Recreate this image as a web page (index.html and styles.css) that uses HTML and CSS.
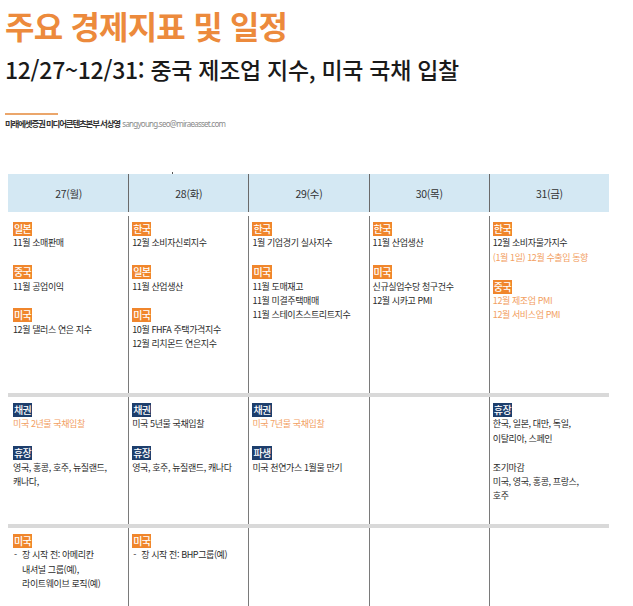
FILE: index.html
```html
<!DOCTYPE html>
<html lang="ko">
<head>
<meta charset="utf-8">
<link rel="stylesheet" href="styles.css">
</head>
<body>
<div class="page">
  <header class="head">
    <h1 class="title">주요 경제지표 및 일정</h1>
    <h2 class="subtitle">12/27~12/31: 중국 제조업 지수, 미국 국채 입찰</h2>
    <div class="rule"></div>
    <p class="author"><span class="org">미래에셋증권 미디어콘텐츠본부 서상영</span> <span class="mail">sangyoung.seo@miraeasset.com</span></p>
  </header>

  <div class="tick"></div>

  <section class="cal">
    <div class="hrow">
      <div class="hcell">27(월)</div>
      <div class="hcell">28(화)</div>
      <div class="hcell">29(수)</div>
      <div class="hcell">30(목)</div>
      <div class="hcell">31(금)</div>
    </div>

    <div class="grid">
      <div class="cell first">
        <div class="ln"><span class="tag o">일본</span></div>
        <div class="ln">11월 소매판매</div>
        <div class="ln"></div>
        <div class="ln"><span class="tag o">중국</span></div>
        <div class="ln">11월 공업이익</div>
        <div class="ln"></div>
        <div class="ln"><span class="tag o">미국</span></div>
        <div class="ln">12월 댈러스 연은 지수</div>
      </div>
      <div class="cell">
        <div class="ln"><span class="tag o">한국</span></div>
        <div class="ln">12월 소비자신뢰지수</div>
        <div class="ln"></div>
        <div class="ln"><span class="tag o">일본</span></div>
        <div class="ln">11월 산업생산</div>
        <div class="ln"></div>
        <div class="ln"><span class="tag o">미국</span></div>
        <div class="ln">10월 FHFA 주택가격지수</div>
        <div class="ln">12월 리치몬드 연은지수</div>
      </div>
      <div class="cell">
        <div class="ln"><span class="tag o">한국</span></div>
        <div class="ln">1월 기업경기 실사지수</div>
        <div class="ln"></div>
        <div class="ln"><span class="tag o">미국</span></div>
        <div class="ln">11월 도매재고</div>
        <div class="ln">11월 미결주택매매</div>
        <div class="ln">11월 스테이츠스트리트지수</div>
      </div>
      <div class="cell">
        <div class="ln"><span class="tag o">한국</span></div>
        <div class="ln">11월 산업생산</div>
        <div class="ln"></div>
        <div class="ln"><span class="tag o">미국</span></div>
        <div class="ln">신규실업수당 청구건수</div>
        <div class="ln">12월 시카고 PMI</div>
      </div>
      <div class="cell">
        <div class="ln"><span class="tag o">한국</span></div>
        <div class="ln">12월 소비자물가지수</div>
        <div class="ln hl">(1월 1일) 12월 수출입 동향</div>
        <div class="ln"></div>
        <div class="ln"><span class="tag o">중국</span></div>
        <div class="ln hl">12월 제조업 PMI</div>
        <div class="ln hl">12월 서비스업 PMI</div>
      </div>

      <div class="sep"></div>

      <div class="cell first">
        <div class="ln"><span class="tag n">채권</span></div>
        <div class="ln hl">미국 2년물 국채입찰</div>
        <div class="ln"></div>
        <div class="ln"><span class="tag n">휴장</span></div>
        <div class="ln">영국, 홍콩, 호주, 뉴질랜드,</div>
        <div class="ln">캐나다,</div>
      </div>
      <div class="cell">
        <div class="ln"><span class="tag n">채권</span></div>
        <div class="ln">미국 5년물 국채입찰</div>
        <div class="ln"></div>
        <div class="ln"><span class="tag n">휴장</span></div>
        <div class="ln">영국, 호주, 뉴질랜드, 캐나다</div>
      </div>
      <div class="cell">
        <div class="ln"><span class="tag n">채권</span></div>
        <div class="ln hl">미국 7년물 국채입찰</div>
        <div class="ln"></div>
        <div class="ln"><span class="tag n">파생</span></div>
        <div class="ln">미국 천연가스 1월물 만기</div>
      </div>
      <div class="cell"></div>
      <div class="cell">
        <div class="ln"><span class="tag n">휴장</span></div>
        <div class="ln">한국, 일본, 대만, 독일,</div>
        <div class="ln">이탈리아, 스페인</div>
        <div class="ln"></div>
        <div class="ln">조기마감</div>
        <div class="ln">미국, 영국, 홍콩, 프랑스,</div>
        <div class="ln">호주</div>
      </div>

      <div class="sep"></div>

      <div class="cell first">
        <div class="ln"><span class="tag o">미국</span></div>
        <div class="item"><span class="dash">-</span><span class="itxt">장 시작 전: 아메리칸<br>내셔널 그룹(예),<br>라이트웨이브 로직(예)</span></div>
      </div>
      <div class="cell">
        <div class="ln"><span class="tag o">미국</span></div>
        <div class="item"><span class="dash">-</span><span class="itxt">장 시작 전: BHP그룹(예)</span></div>
      </div>
      <div class="cell"></div>
      <div class="cell"></div>
      <div class="cell"></div>
    </div>
  </section>
</div>
</body>
</html>
```

FILE: styles.css
```css
* { box-sizing: border-box; }
html, body { margin: 0; padding: 0; background: #fff; }
body {
  font-family: "Noto Sans CJK KR", "Noto Sans", sans-serif;
  color: #222;
  width: 633px;
  height: 606px;
  overflow: hidden;
}
.page { padding-top: 6px; }
.head { padding-left: 5px; }
.title {
  margin: 0;
  font-size: 32px;
  line-height: 38px;
  font-weight: 700;
  color: #ec8a3c;
  letter-spacing: -0.8px;
}
.subtitle {
  margin: 10px 0 0 0;
  font-size: 23px;
  line-height: 30px;
  font-weight: 500;
  color: #1a1a1a;
  letter-spacing: -0.3px;
}
.rule {
  width: 53px;
  height: 2px;
  background: #eba66b;
  margin-top: 29px;
}
.author {
  margin: 2px 0 0 0;
  font-size: 8.5px;
  line-height: 12px;
  white-space: nowrap;
}
.org { font-weight: 700; color: #333; letter-spacing: -1.2px; }
.mail { color: #8a8a8a; letter-spacing: -0.75px; font-size: 8px; font-family: "Noto Sans", sans-serif; }
.tick {
  width: 1px;
  height: 2px;
  background: #555;
  margin: 42px 0 0 172px;
}
.cal {
  margin-left: 8px;
  width: 601px;
}
.hrow {
  display: grid;
  grid-template-columns: repeat(5, 1fr);
  height: 38px;
  background: #d4e8f3;
}
.hcell {
  display: flex;
  align-items: center;
  justify-content: center;
  font-size: 10.5px;
  color: #333;
  border-left: 1px solid #6a6a6a;
  letter-spacing: -0.3px;
}
.hcell:first-child { border-left-color: transparent; }
.grid {
  margin-top: 4px;
  display: grid;
  grid-template-columns: repeat(5, 1fr);
  grid-template-rows: 177px 4px 127px 4px 90px;
}
.cell {
  border-left: 1px solid #7a7a7a;
  padding: 6px 0 0 3px;
  font-size: 9px;
  letter-spacing: -0.4px;
  color: #2a2a2a;
}
.cell.first { border-left-color: transparent; padding-left: 4px; }
.ln {
  height: 14.4px;
  line-height: 14.4px;
  white-space: nowrap;
}
.hl { color: #f2a062; }
.tag {
  display: inline-block;
  height: 14px;
  line-height: 14px;
  padding: 0 1px;
  color: #fff;
  font-size: 10px;
  font-weight: 500;
  letter-spacing: -0.6px;
  vertical-align: top;
}
.tag.o { background: #f0862c; }
.tag.n { background: #1d3e6c; }
.sep {
  grid-column: 1 / -1;
  background: #d9d9d9;
}
.item {
  display: flex;
  line-height: 14.4px;
}
.dash { width: 9px; flex: none; padding-left: 1px; }
.itxt { white-space: nowrap; }
```
